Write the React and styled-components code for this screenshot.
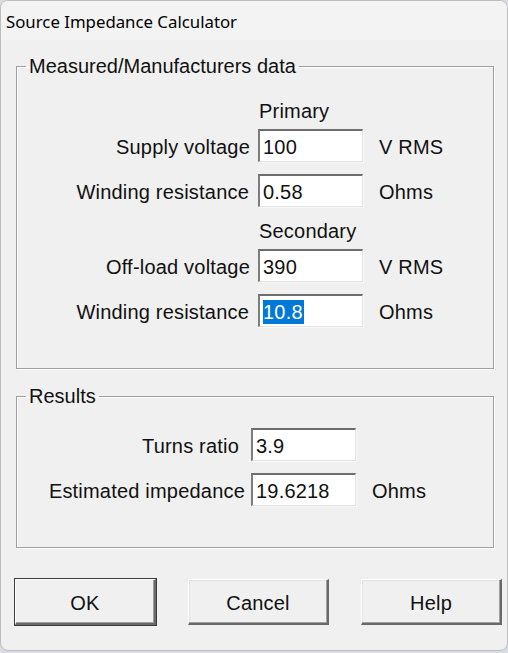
import React from 'react';
import styled, { createGlobalStyle } from 'styled-components';

const GlobalStyle = createGlobalStyle`
  html, body {
    margin: 0;
    padding: 0;
    background: #d9dde3;
  }
  * {
    box-sizing: border-box;
  }
`;

const Window = styled.div`
  width: 508px;
  height: 651px;
  background: #f0f0f0;
  border: 1px solid #bdbdbd;
  border-radius: 8px;
  overflow: hidden;
  display: flex;
  flex-direction: column;
  font-family: "Liberation Sans", Arial, sans-serif;
  font-size: 20px;
  letter-spacing: 0.2px;
  color: #111;
`;

const TitleBar = styled.div`
  height: 39px;
  background: #f3f3f3;
  display: flex;
  align-items: center;
  padding: 2px 0 0 5px;
  font-family: "Noto Sans", "Open Sans", sans-serif;
  font-size: 16.8px;
  letter-spacing: 0;
  color: #000;
`;

const Group = styled.fieldset`
  margin: ${(p) => p.$top}px 13px 0 15px;
  padding: 0 0 ${(p) => p.$bottom}px 0;
  border: 1px solid #a0a0a0;
  box-shadow: 1px 1px 0 #ffffff, inset 1px 1px 0 #ffffff;
  min-width: 0;
`;

const Legend = styled.legend`
  margin-left: 9px;
  padding: 0 3px 0 3px;
  line-height: 23px;
  letter-spacing: 0;
`;

const Heading = styled.div`
  margin: ${(p) => p.$top}px 0 6px 242px;
  height: 24px;
  line-height: 24px;
`;

const Row = styled.div`
  display: grid;
  grid-template-columns: ${(p) => p.$label}px 105px auto;
  align-items: center;
  height: 33px;
  margin-top: ${(p) => p.$top || 0}px;
`;

const Label = styled.span`
  text-align: right;
  white-space: nowrap;
  padding: 3px ${(p) => p.$pad || 8}px 0 0;
`;

const Field = styled.div`
  height: 33px;
  background: #fff;
  border-style: solid;
  border-width: 2px 1px 1px 2px;
  border-color: #6d6d6d #e3e3e3 #e3e3e3 #7d7d7d;
  box-shadow: 1px 1px 0 #f8f8f8;
  padding: 1px 0 0 3px;
  display: flex;
  align-items: center;
  line-height: 24px;
`;

const Selected = styled.span`
  background: #0078d7;
  color: #fff;
  padding-right: 1px;
`;

const Unit = styled.span`
  padding: 3px 0 0 16px;
`;

const ButtonBar = styled.div`
  display: flex;
  gap: 32px;
  margin: 31px 0 0 14px;
`;

const Button = styled.button`
  width: 141px;
  height: 46px;
  font-family: "Liberation Sans", Arial, sans-serif;
  font-size: 20px;
  letter-spacing: 0.2px;
  color: #111;
  background: #f0f0f0;
  border-style: solid;
  border-width: 1px 2px 2px 1px;
  border-color: #ffffff #696969 #696969 #ffffff;
  box-shadow: ${(p) =>
    p.$default
      ? '0 0 0 1px #3c3c3c, inset -1px -1px 0 #a0a0a0'
      : 'inset -1px -1px 0 #a0a0a0, inset 1px 1px 0 #e3e3e3'};
  padding: 3px 0 0 0;
`;

export default function App() {
  return (
    <>
      <GlobalStyle />
      <Window>
        <TitleBar>Source Impedance Calculator</TitleBar>

        <Group $top={15} $bottom={41}>
          <Legend>Measured/Manufacturers data</Legend>
          <Heading $top={21}>Primary</Heading>
          <Row $label={241}>
            <Label>Supply voltage</Label>
            <Field>100</Field>
            <Unit>V RMS</Unit>
          </Row>
          <Row $label={241} $top={12}>
            <Label $pad={9}>Winding resistance</Label>
            <Field>0.58</Field>
            <Unit>Ohms</Unit>
          </Row>
          <Heading $top={12}>Secondary</Heading>
          <Row $label={241}>
            <Label>Off-load voltage</Label>
            <Field>390</Field>
            <Unit>V RMS</Unit>
          </Row>
          <Row $label={241} $top={12}>
            <Label $pad={9}>Winding resistance</Label>
            <Field>
              <Selected>10.8</Selected>
            </Field>
            <Unit>Ohms</Unit>
          </Row>
        </Group>

        <Group $top={16} $bottom={41}>
          <Legend>Results</Legend>
          <Row $label={234} $top={20}>
            <Label $pad={12}>Turns ratio</Label>
            <Field>3.9</Field>
          </Row>
          <Row $label={234} $top={12}>
            <Label $pad={6}>Estimated impedance</Label>
            <Field>19.6218</Field>
            <Unit>Ohms</Unit>
          </Row>
        </Group>

        <ButtonBar>
          <Button $default>OK</Button>
          <Button>Cancel</Button>
          <Button>Help</Button>
        </ButtonBar>
      </Window>
    </>
  );
}
